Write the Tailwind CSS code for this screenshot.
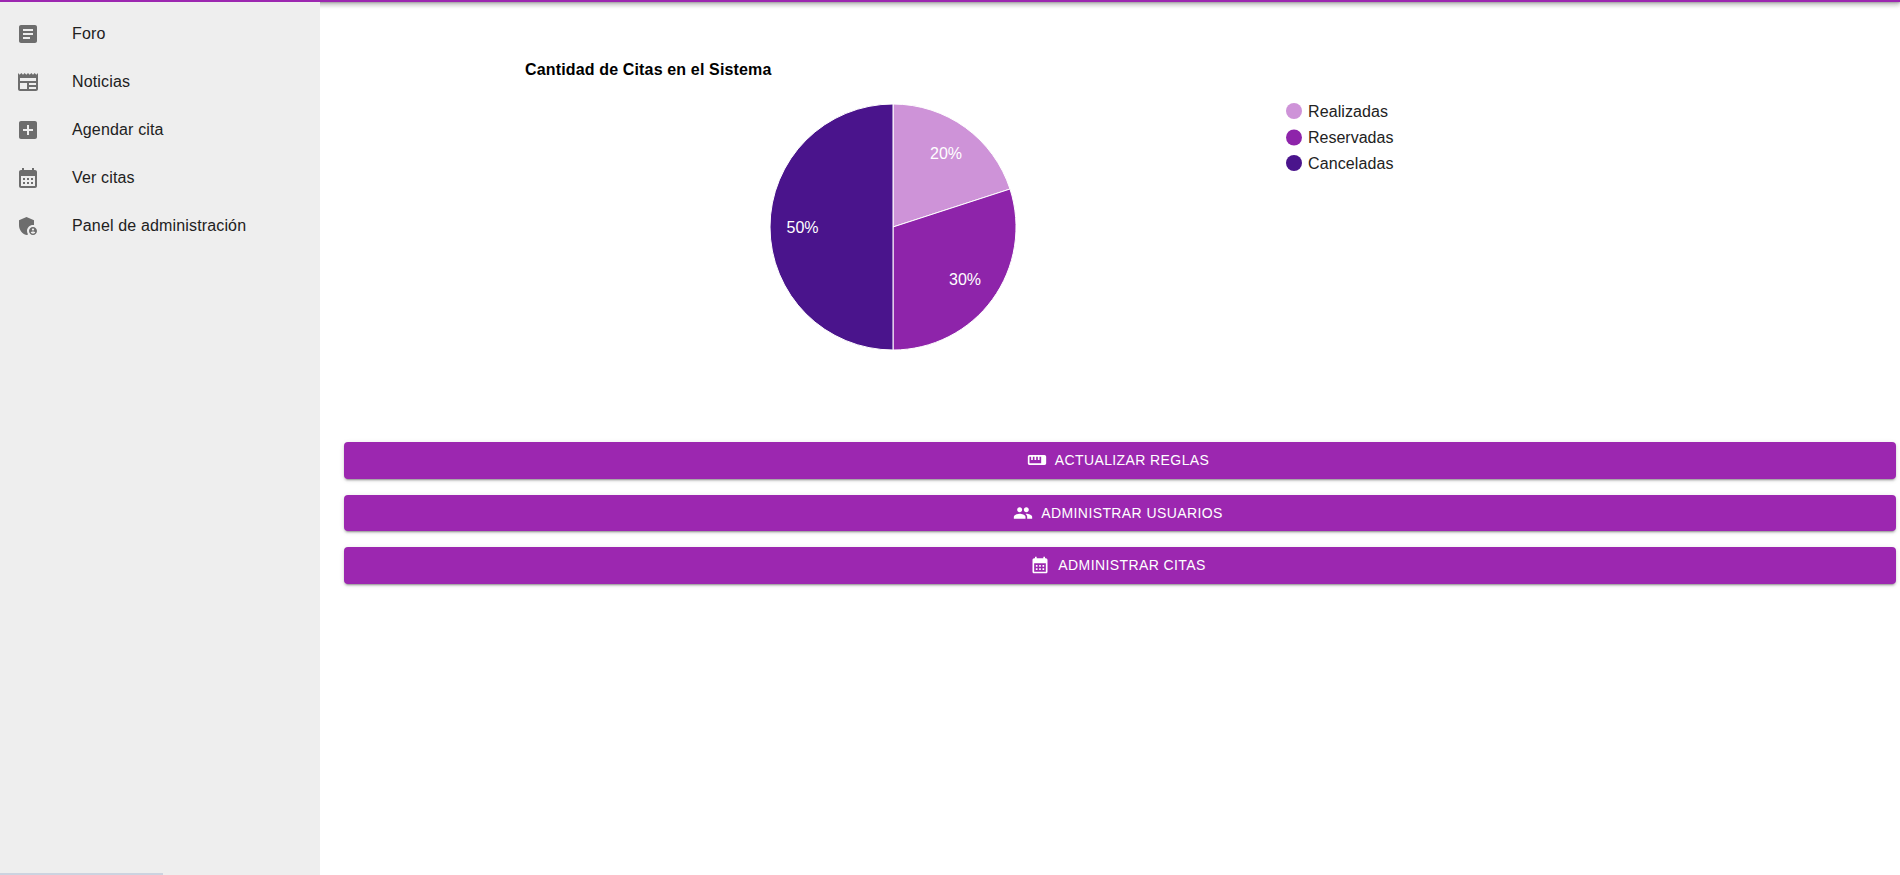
<!DOCTYPE html>
<html lang="es">
<head>
  <meta charset="UTF-8">
  <meta name="viewport" content="width=device-width, initial-scale=1.0">
  <script src="https://cdn.jsdelivr.net/npm/@tailwindcss/browser@4"></script>
  <title>Panel de administración</title>
</head>
<body class="h-screen overflow-hidden bg-white font-['Liberation_Sans',Arial,sans-serif] text-[#212121]">
  <div class="h-[2px] bg-[#9c27b0] shadow-[0_1px_2px_0_rgba(0,0,0,0.3),0_2px_4px_0_rgba(0,0,0,0.3),0_3px_5px_0_rgba(0,0,0,0.2)]"></div>

  <div class="flex h-[873px]">
    <!-- sidebar -->
    <nav class="relative z-10 w-[320px] shrink-0 bg-[#eeeeee] pt-2">
      <a class="flex h-12 items-center pl-4">
        <svg class="h-6 w-6 fill-[#6d6d6d]" viewBox="0 0 24 24"><path d="M19 3H5c-1.1 0-2 .9-2 2v14c0 1.1.9 2 2 2h14c1.1 0 2-.9 2-2V5c0-1.1-.9-2-2-2zm-5 14H7v-2h7v2zm3-4H7v-2h10v2zm0-4H7V7h10v2z"/></svg>
        <span class="ml-8 text-base tracking-[0.15px]">Foro</span>
      </a>
      <a class="flex h-12 items-center pl-4">
        <svg class="h-6 w-6 fill-[#6d6d6d]" viewBox="0 0 24 24"><path d="m22 3-1.67 1.67L18.67 3 17 4.67 15.33 3l-1.66 1.67L12 3l-1.67 1.67L8.67 3 7 4.67 5.33 3 3.67 4.67 2 3v16c0 1.1.9 2 2 2h16c1.1 0 2-.9 2-2V3zM11 19H4v-6h7v6zm9 0h-7v-2h7v2zm0-4h-7v-2h7v2zm0-4H4V8h16v3z"/></svg>
        <span class="ml-8 text-base tracking-[0.15px]">Noticias</span>
      </a>
      <a class="flex h-12 items-center pl-4">
        <svg class="h-6 w-6 fill-[#6d6d6d]" viewBox="0 0 24 24"><path d="M19 3H5c-1.11 0-2 .9-2 2v14c0 1.1.89 2 2 2h14c1.1 0 2-.9 2-2V5c0-1.1-.9-2-2-2zm-2 10h-4v4h-2v-4H7v-2h4V7h2v4h4v2z"/></svg>
        <span class="ml-8 text-base tracking-[0.15px]">Agendar cita</span>
      </a>
      <a class="flex h-12 items-center pl-4">
        <svg class="h-6 w-6 fill-[#6d6d6d]" viewBox="0 0 24 24"><path d="M19 4h-1V2h-2v2H8V2H6v2H5c-1.11 0-1.99.9-1.99 2L3 20c0 1.1.89 2 2 2h14c1.1 0 2-.9 2-2V6c0-1.1-.9-2-2-2zm0 16H5V10h14v10zM9 14H7v-2h2v2zm4 0h-2v-2h2v2zm4 0h-2v-2h2v2zm-8 4H7v-2h2v2zm4 0h-2v-2h2v2zm4 0h-2v-2h2v2z"/></svg>
        <span class="ml-8 text-base tracking-[0.15px]">Ver citas</span>
      </a>
      <a class="flex h-12 items-center pl-4">
        <svg class="h-6 w-6 fill-[#6d6d6d]" viewBox="0 0 24 24"><path d="M17 11c.34 0 .67.04 1 .09V6.27L10.5 3 3 6.27v4.91c0 4.54 3.2 8.79 7.5 9.82.55-.13 1.08-.32 1.6-.55-.69-.98-1.1-2.17-1.1-3.45 0-3.31 2.69-6 6-6z"/><path d="M17 13c-2.21 0-4 1.79-4 4s1.79 4 4 4 4-1.79 4-4-1.79-4-4-4zm0 1.38c.62 0 1.12.51 1.12 1.12s-.51 1.12-1.12 1.12-1.12-.51-1.12-1.12.5-1.12 1.12-1.12zm0 5.37c-.93 0-1.74-.46-2.24-1.17.05-.72 1.51-1.08 2.24-1.08s2.19.36 2.24 1.08c-.5.71-1.31 1.17-2.24 1.17z"/></svg>
        <span class="ml-8 text-base tracking-[0.15px]">Panel de administración</span>
      </a>
      <!-- scrollbar thumb -->
      <div class="absolute bottom-0 left-0 h-[2px] w-[163px] bg-[#ccd3e0]"></div>
    </nav>

    <!-- content -->
    <main class="min-w-0 grow pl-6 pr-1">
      <svg class="block h-[440px] w-full" font-family="'Liberation Sans', Arial, sans-serif" font-size="16">
        <text x="181" y="73" font-weight="700" font-size="16" letter-spacing="0.15" fill="#000">Cantidad de Citas en el Sistema</text>

        <path d="M549 225V102A123 123 0 0 1 666 187Z" fill="#ce93d8" stroke="#fff"/>
        <path d="M549 225L666 187A123 123 0 0 1 549 348Z" fill="#8e24aa" stroke="#fff"/>
        <path d="M549 225V348A123 123 0 0 1 549 102Z" fill="#4a148c" stroke="#fff"/>
        <text x="602" y="156.5" text-anchor="middle" fill="#fff">20%</text>
        <text x="621" y="282.5" text-anchor="middle" fill="#fff">30%</text>
        <text x="458.5" y="230.5" text-anchor="middle" fill="#fff">50%</text>

        <circle cx="950" cy="109" r="8" fill="#ce93d8"/>
        <text x="964" y="114.5" letter-spacing="0.1" fill="#222">Realizadas</text>
        <circle cx="950" cy="135.5" r="8" fill="#8e24aa"/>
        <text x="964" y="141" fill="#222">Reservadas</text>
        <circle cx="950" cy="161" r="8" fill="#4a148c"/>
        <text x="964" y="166.5" letter-spacing="0.1" fill="#222">Canceladas</text>
      </svg>

      <button class="flex h-[36.5px] w-full items-center justify-center rounded bg-[#9c27b0] text-sm uppercase tracking-[0.4px] text-white shadow-[0_3px_1px_-2px_rgba(0,0,0,0.2),0_2px_2px_0_rgba(0,0,0,0.14),0_1px_5px_0_rgba(0,0,0,0.12)]">
        <svg class="-ml-1 mr-2 h-5 w-5 fill-white" viewBox="0 0 24 24"><path d="M21 6H3c-1.1 0-2 .9-2 2v8c0 1.1.9 2 2 2h18c1.1 0 2-.9 2-2V8c0-1.1-.9-2-2-2zm0 10H3V8h2v4h2V8h2v4h2V8h2v4h2V8h2v8z"/></svg>
        Actualizar reglas
      </button>
      <button class="mt-4 flex h-[36.5px] w-full items-center justify-center rounded bg-[#9c27b0] text-sm uppercase tracking-[0.4px] text-white shadow-[0_3px_1px_-2px_rgba(0,0,0,0.2),0_2px_2px_0_rgba(0,0,0,0.14),0_1px_5px_0_rgba(0,0,0,0.12)]">
        <svg class="-ml-1 mr-2 h-5 w-5 fill-white" viewBox="0 0 24 24"><path d="M16 11c1.66 0 2.99-1.34 2.99-3S17.66 5 16 5c-1.66 0-3 1.34-3 3s1.34 3 3 3zm-8 0c1.66 0 2.99-1.34 2.99-3S9.66 5 8 5C6.34 5 5 6.34 5 8s1.34 3 3 3zm0 2c-2.33 0-7 1.17-7 3.5V19h14v-2.5c0-2.33-4.67-3.5-7-3.5zm8 0c-.29 0-.62.02-.97.05 1.16.84 1.97 1.97 1.97 3.45V19h6v-2.5c0-2.33-4.67-3.5-7-3.5z"/></svg>
        Administrar usuarios
      </button>
      <button class="mt-4 flex h-[36.5px] w-full items-center justify-center rounded bg-[#9c27b0] text-sm uppercase tracking-[0.4px] text-white shadow-[0_3px_1px_-2px_rgba(0,0,0,0.2),0_2px_2px_0_rgba(0,0,0,0.14),0_1px_5px_0_rgba(0,0,0,0.12)]">
        <svg class="-ml-1 mr-2 h-5 w-5 fill-white" viewBox="0 0 24 24"><path d="M19 4h-1V2h-2v2H8V2H6v2H5c-1.11 0-1.99.9-1.99 2L3 20c0 1.1.89 2 2 2h14c1.1 0 2-.9 2-2V6c0-1.1-.9-2-2-2zm0 16H5V10h14v10zM9 14H7v-2h2v2zm4 0h-2v-2h2v2zm4 0h-2v-2h2v2zm-8 4H7v-2h2v2zm4 0h-2v-2h2v2zm4 0h-2v-2h2v2z"/></svg>
        Administrar citas
      </button>
    </main>
  </div>
</body>
</html>
